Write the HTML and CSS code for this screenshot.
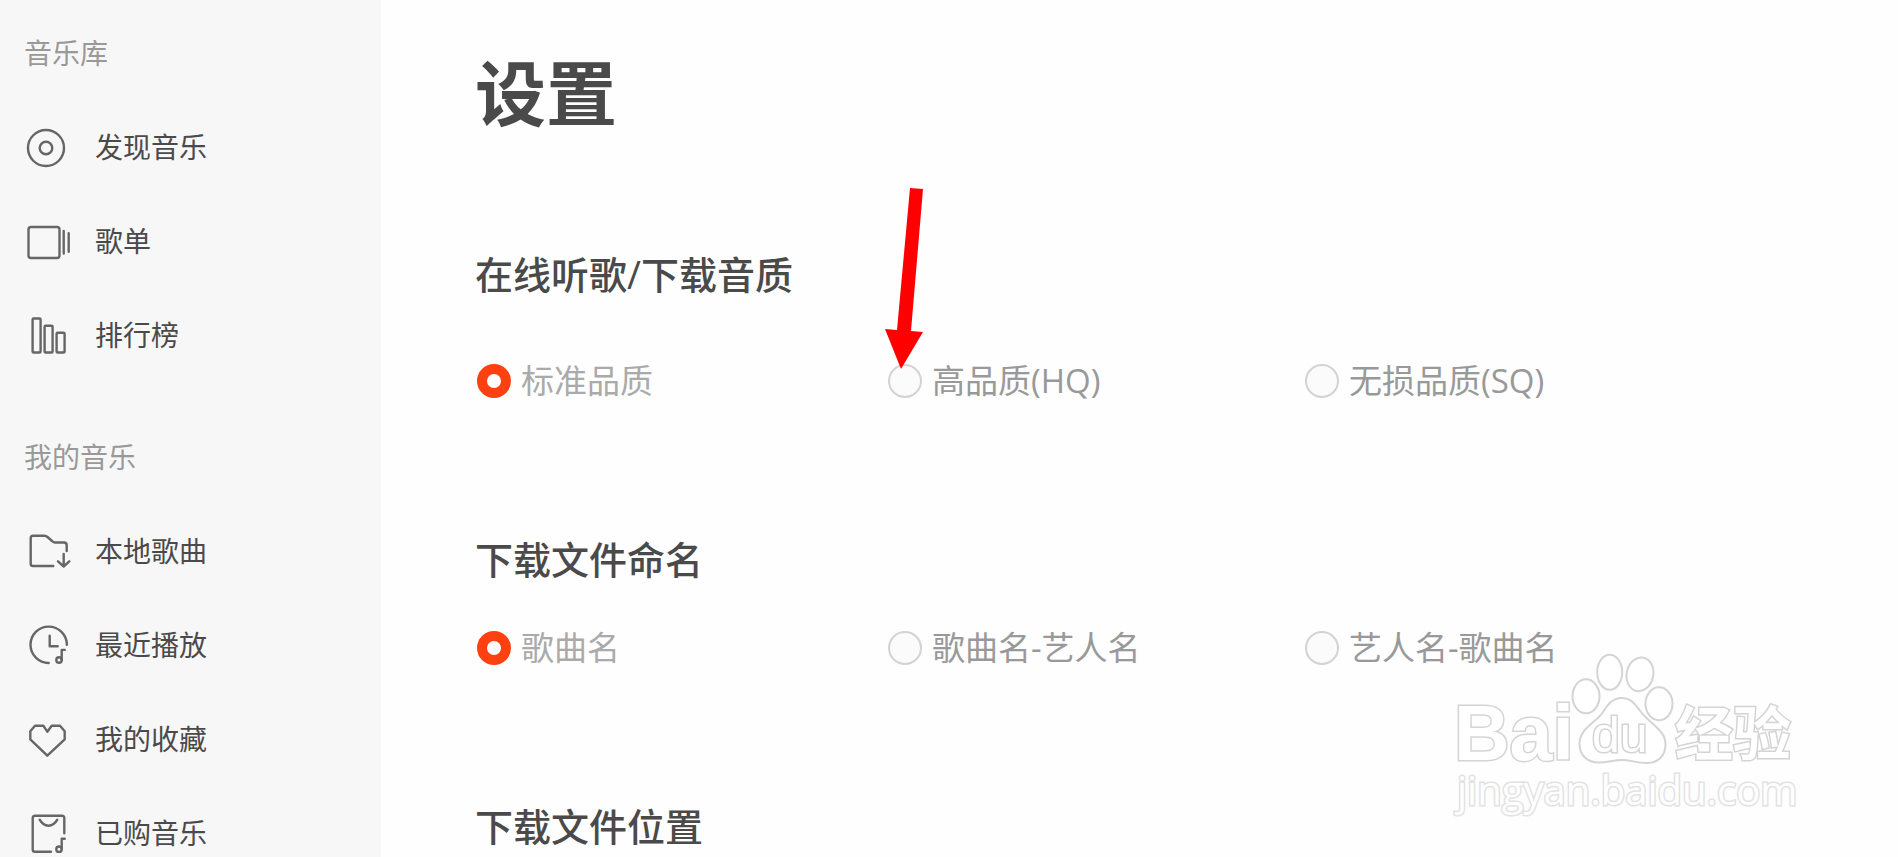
FILE: index.html
```html
<!DOCTYPE html>
<html lang="zh-CN">
<head>
    <meta charset="UTF-8">
    <meta name="viewport" content="width=device-width, initial-scale=1.0">
    <title>设置</title>
    <link rel="stylesheet" href="styles.css">
</head>
<body>
    <div class="layout">
        <nav class="sidebar">
            <div class="menu">
                <h3>音乐库</h3>
                <a href="#discover">
                    <svg class="icon" viewBox="0 0 48 48"><circle cx="22" cy="25" r="18"/><circle cx="22" cy="25" r="6.3"/></svg>
                    发现音乐
                </a>
                <a href="#playlist">
                    <svg class="icon" viewBox="0 0 48 48"><rect x="4.5" y="10" width="31" height="31" rx="2.5"/><path d="M39.7 14v22.5M44.7 16.3v18.5"/></svg>
                    歌单
                </a>
                <a href="#rank">
                    <svg class="icon" viewBox="0 0 48 48"><rect x="8.6" y="7.5" width="8" height="34" rx="1"/><rect x="20.6" y="14.8" width="8" height="26.7" rx="1"/><rect x="32.6" y="21.8" width="8" height="19.7" rx="1"/></svg>
                    排行榜
                </a>
            </div>
            <div class="menu">
                <h3>我的音乐</h3>
                <a href="#local">
                    <svg class="icon" viewBox="0 0 48 48"><path d="M29.3 39H9q-2.3 0-2.3-2.3V11Q6.7 8.7 9 8.7h11.5q1.5 0 3 1.3l4.5 4q1.5 1.5 3 1.5h9q2.7 0 2.7 2.7V24M39.7 27v12.5M34 34.3l5.7 5.2 5.6-5.2"/></svg>
                    本地歌曲
                </a>
                <a href="#recent">
                    <svg class="icon" viewBox="0 0 48 48"><path d="M24.7 42a18.2 18.2 0 1 1 18.2-18.3M25.7 14.7v10.6h8M37.7 39V28.9h3"/><circle cx="35" cy="39" r="2.7"/></svg>
                    最近播放
                </a>
                <a href="#favorite">
                    <svg class="icon" viewBox="0 0 48 48"><path d="M11 10.7h8.3l4 6 4.4-6H36l4.7 5.5v8.1L23.3 40.7 6.3 24.3v-8.1z"/></svg>
                    我的收藏
                </a>
                <a href="#bought">
                    <svg class="icon" viewBox="0 0 48 48"><path d="M27 42.7H11q-2.3 0-2.3-2.3V9Q8.7 6.7 11 6.7h27q2.3 0 2.3 2.3v15.3M15.7 10.7q3.3 6 8.8 6t8.8-6M37.7 40V29.7h3"/><circle cx="35" cy="40.2" r="2.7"/></svg>
                    已购音乐
                </a>
            </div>
        </nav>

        <main class="content">
            <h1>设置</h1>

            <section class="quality">
                <h2>在线听歌/下载音质</h2>
                <div class="options">
                    <label class="selected"><input type="radio" name="quality" checked>标准品质</label>
                    <label>
                        <input type="radio" name="quality">高品质(HQ)
                        <svg class="arrow" viewBox="0 0 40 182"><path d="M25 0L38 1L26 143L38 144L16 181L0 141L12 142Z"/></svg>
                    </label>
                    <label><input type="radio" name="quality">无损品质(SQ)</label>
                </div>
            </section>

            <section>
                <h2>下载文件命名</h2>
                <div class="options">
                    <label class="selected"><input type="radio" name="naming" checked>歌曲名</label>
                    <label><input type="radio" name="naming">歌曲名-艺人名</label>
                    <label><input type="radio" name="naming">艺人名-歌曲名</label>
                </div>
            </section>

            <section>
                <h2>下载文件位置</h2>
            </section>
        </main>
    </div>

    <svg class="watermark" viewBox="0 0 360 170">
        <ellipse cx="136" cy="46.3" rx="13.5" ry="17"/>
        <ellipse cx="159.7" cy="22.3" rx="12.5" ry="17.5"/>
        <ellipse cx="190" cy="24.3" rx="13.3" ry="17" transform="rotate(12 190 24.3)"/>
        <ellipse cx="209" cy="53.7" rx="13.5" ry="16.5"/>
        <path d="M171.7 48C163 48 158 54 153 62C146 73 129.5 78 129.5 94C129.5 106 138 112.5 149 112.5C158 112.5 163 110 172 110C181 110 186 113 197 113C208 113 215.5 106 215.5 94C215.5 80 199 73 191 62C185 54 181 48 171.7 48Z"/>
        <text class="logo" x="4" y="110">Bai</text>
        <text class="du" x="142" y="102">du</text>
        <text class="logo-cn" x="225" y="105">经验</text>
        <text class="site" x="7" y="155">jingyan.baidu.com</text>
    </svg>
</body>
</html>
```
FILE: styles.css
```css
body {
    font-family: "Open Sans", "Noto Sans CJK SC", sans-serif;
    margin: 0;
    background-color: #fefefe;
    color: #4a4a4a;
}

.layout {
    display: flex;
    height: 100vh;
    overflow: hidden;
}

/* sidebar */
.sidebar {
    flex: none;
    width: 357px;
    padding: 6px 0 0 24px;
    background-color: #f7f7f7;
    font-size: 28px;
    line-height: 94px;
}

.menu {
    margin-bottom: 28px;
}

.menu h3 {
    margin: 0;
    font-size: 28px;
    font-weight: normal;
    color: #999;
}

.menu a {
    display: flex;
    align-items: center;
    gap: 23px;
    color: #4a4a4a;
    text-decoration: none;
}

.icon {
    width: 48px;
    height: 48px;
    fill: none;
    stroke: #666;
    stroke-width: 2.4;
    stroke-linecap: round;
    stroke-linejoin: round;
}

/* settings */
.content {
    flex: 1;
    padding: 48px 0 0 94px;
}

h1 {
    margin: 0 0 108px;
    font-size: 71px;
    line-height: 90px;
}

h2 {
    margin: 0 0 37px;
    font-size: 38px;
    font-weight: 500;
    line-height: 56px;
}

section {
    margin-bottom: 126px;
}

.quality h2 {
    margin-bottom: 55px;
}

.options {
    display: grid;
    grid-template-columns: 411fr 417fr 595fr;
    font-size: 33px;
    line-height: 48px;
    color: #999;
}

.options label {
    position: relative;
    display: flex;
    align-items: center;
}

.options .selected {
    color: #aaa;
}

.options input {
    appearance: none;
    width: 34px;
    height: 34px;
    margin: 0 10px 0 2px;
    border: 2px solid #d6d2d2;
    border-radius: 50%;
    background-color: #fbfbfb;
}

.options input:checked {
    border: 10px solid #ff4010;
    background-color: #fff;
}

.arrow {
    position: absolute;
    left: -1px;
    bottom: 35px;
    width: 40px;
    height: 182px;
    fill: #f00;
    pointer-events: none;
}

/* watermark */
.watermark {
    position: absolute;
    right: 88px;
    bottom: 37px;
    width: 360px;
    height: 170px;
    fill: #fff;
    stroke: #d4d4d4;
    stroke-width: 2;
    pointer-events: none;
}

.watermark text {
    paint-order: stroke;
    stroke-width: 3;
}

.logo {
    font: bold 77px "Liberation Sans", sans-serif;
}

.logo-cn {
    font: bold 58px "Noto Sans CJK SC", sans-serif;
}

.du {
    font: 50px "Liberation Sans", sans-serif;
}

.site {
    font: 40px "Open Sans", sans-serif;
    stroke: #e2e2e2;
}
```
